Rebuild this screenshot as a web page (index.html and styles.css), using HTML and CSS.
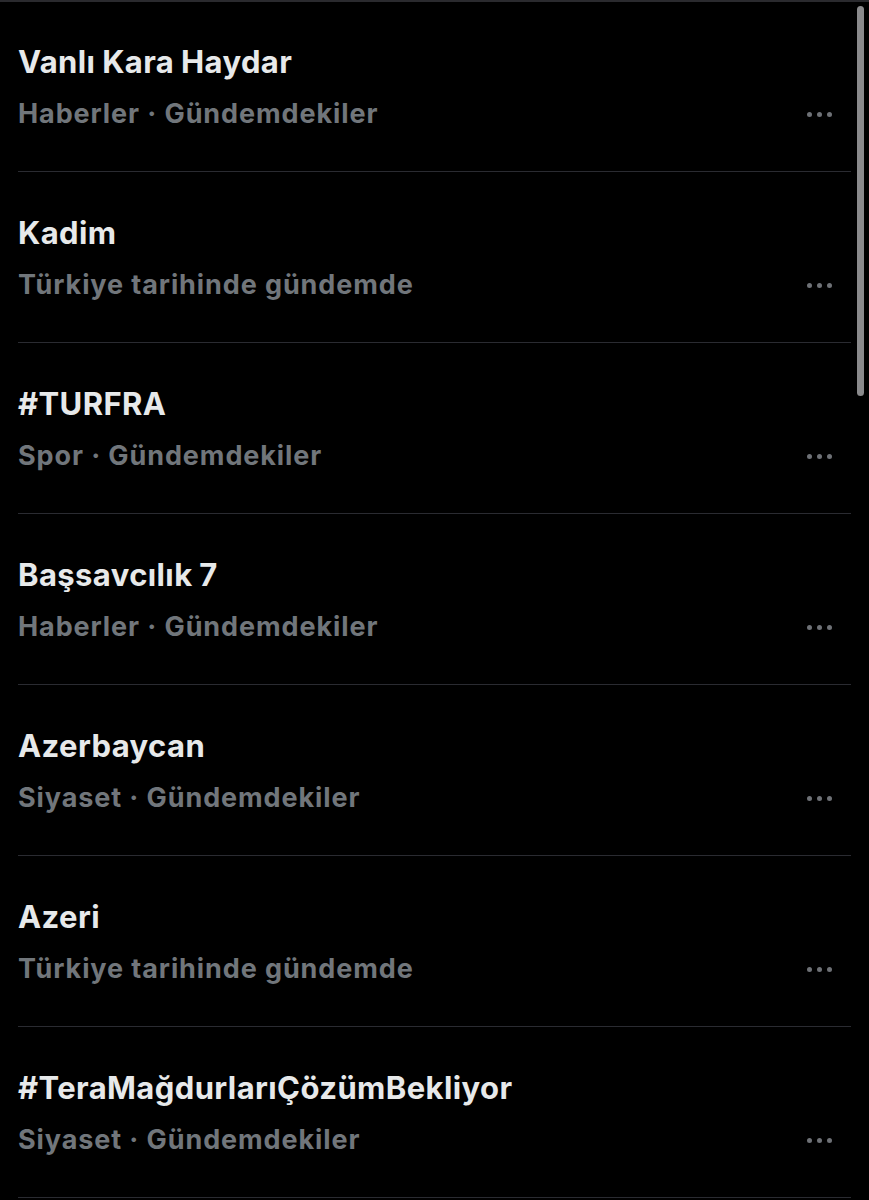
FILE: index.html
```html
<!DOCTYPE html>
<html lang="tr">
<head>
<meta charset="utf-8">
<link rel="stylesheet" href="styles.css">
</head>
<body>
<div class="page">
  <div class="list">
    <div class="row"><div class="title">Vanlı Kara Haydar</div><div class="sub"><span>Haberler · Gündemdekiler</span><span class="dots"><i></i><i></i><i></i></span></div></div>
    <div class="row"><div class="title">Kadim</div><div class="sub"><span>Türkiye tarihinde gündemde</span><span class="dots"><i></i><i></i><i></i></span></div></div>
    <div class="row"><div class="title">#TURFRA</div><div class="sub"><span>Spor · Gündemdekiler</span><span class="dots"><i></i><i></i><i></i></span></div></div>
    <div class="row"><div class="title">Başsavcılık 7</div><div class="sub"><span>Haberler · Gündemdekiler</span><span class="dots"><i></i><i></i><i></i></span></div></div>
    <div class="row"><div class="title">Azerbaycan</div><div class="sub"><span>Siyaset · Gündemdekiler</span><span class="dots"><i></i><i></i><i></i></span></div></div>
    <div class="row"><div class="title">Azeri</div><div class="sub"><span>Türkiye tarihinde gündemde</span><span class="dots"><i></i><i></i><i></i></span></div></div>
    <div class="row"><div class="title">#TeraMağdurlarıÇözümBekliyor</div><div class="sub"><span>Siyaset · Gündemdekiler</span><span class="dots"><i></i><i></i><i></i></span></div></div>
  </div>
  <div class="scrollbar"></div>
</div>
</body>
</html>
```
FILE: styles.css
```css
html, body {
  margin: 0;
  padding: 0;
  background: #000;
}
.page {
  position: relative;
  width: 869px;
  height: 1200px;
  overflow: hidden;
  background: #000;
  font-family: Inter, "Liberation Sans", Arial, sans-serif;
}
.page::before {
  content: "";
  position: absolute;
  top: 0;
  left: 0;
  right: 0;
  height: 2px;
  background: #2a2a2e;
}
.list {
  display: flex;
  flex-direction: column;
  padding-top: 1px;
}
.row {
  margin: 0 18px;
  height: 171px;
  box-sizing: border-box;
  border-bottom: 1px solid #2a2b31;
  padding-top: 43px;
  display: flex;
  flex-direction: column;
}
.title {
  color: #e7e9ea;
  font-size: 31px;
  font-weight: 700;
  line-height: 36px;
  letter-spacing: 0.4px;
  word-spacing: -1px;
}
.sub {
  margin-top: 17px;
  display: flex;
  justify-content: space-between;
  align-items: center;
  color: #71767b;
  font-size: 27px;
  font-weight: 700;
  line-height: 34px;
  letter-spacing: 0.9px;
}
.dots {
  display: flex;
  gap: 5px;
  margin-right: 19px;
}
.dots i {
  width: 5px;
  height: 5px;
  border-radius: 50%;
  background: #6e7176;
}
.scrollbar {
  position: absolute;
  top: 6px;
  left: 857px;
  width: 7px;
  height: 390px;
  border-radius: 4px;
  background: #8a8a8c;
}
```
